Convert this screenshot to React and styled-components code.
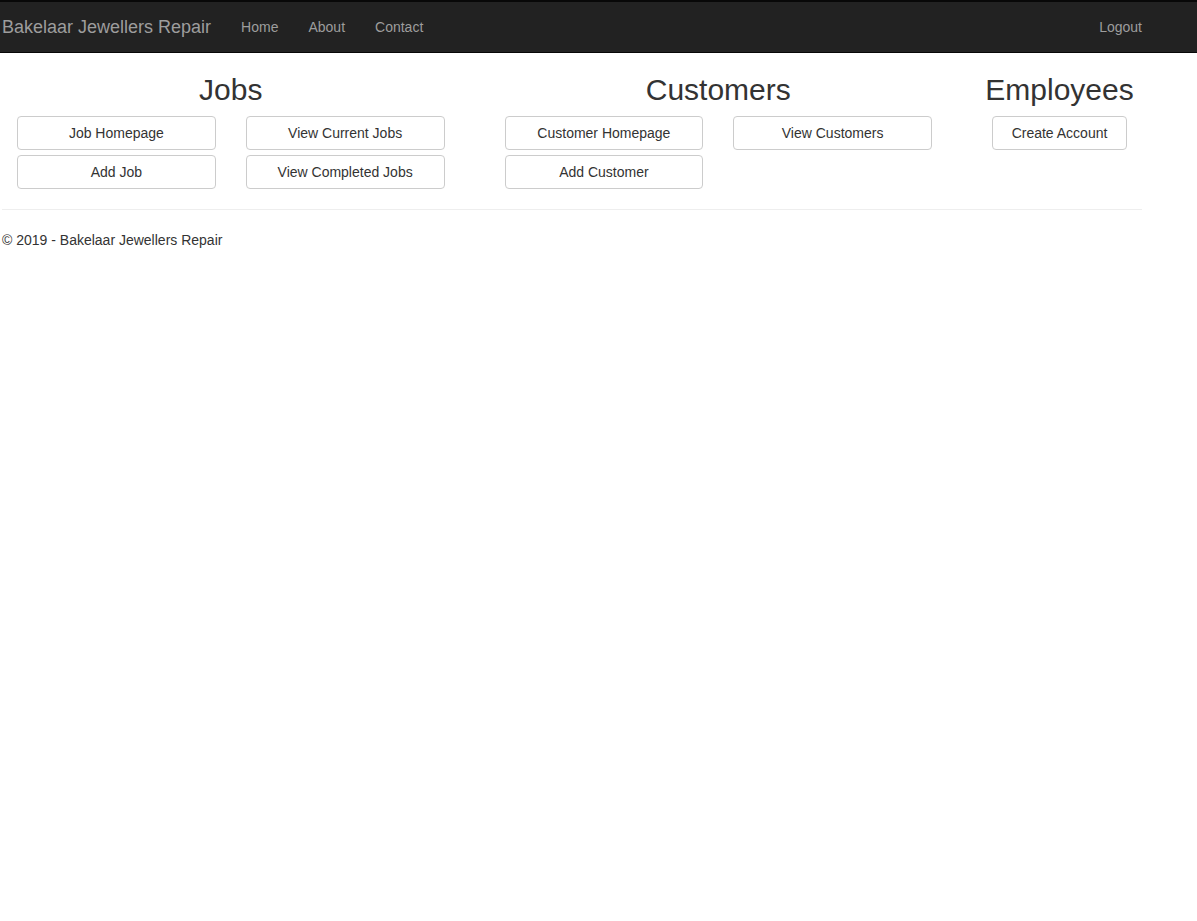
import React from "react";
import styled, { createGlobalStyle } from "styled-components";

const GlobalStyle = createGlobalStyle`
  html, body {
    margin: 0;
    padding: 0;
    background: #fff;
  }
  body {
    font-family: "Liberation Sans", Arial, Helvetica, sans-serif;
    font-size: 14px;
    line-height: 1.42857;
    color: #333;
  }
  * {
    box-sizing: border-box;
  }
`;

const Navbar = styled.nav`
  background-color: #222;
  border-top: 2px solid #080808;
  border-bottom: 1px solid #080808;
  height: 53px;
`;

const NavContainer = styled.div`
  width: 1140px;
  margin-left: 2px;
  display: flex;
  align-items: center;
  height: 50px;
`;

const Brand = styled.a`
  font-size: 18px;
  line-height: 20px;
  color: #9d9d9d;
  padding-right: 15px;
  text-decoration: none;
`;

const NavList = styled.ul`
  display: flex;
  list-style: none;
  margin: 0;
  padding: 0;
  margin-left: ${(p) => (p.right ? "auto" : "0")};
  margin-right: ${(p) => (p.right ? "-15px" : "0")};
`;

const NavLink = styled.a`
  display: block;
  padding: 15px;
  line-height: 20px;
  color: #9d9d9d;
  text-decoration: none;
`;

const Container = styled.div`
  width: 1140px;
  margin-left: 2px;
`;

const Row = styled.div`
  display: flex;
  margin: 0 -15px;
`;

const Column = styled.section`
  width: ${(p) => (p.span / 12) * 1170}px;
  padding: 0 15px;
  text-align: center;
`;

const Heading = styled.h2`
  font-size: 30px;
  font-weight: 500;
  line-height: 1.1;
  margin: 20px 0 10px;
  color: #333;
`;

const ButtonGrid = styled.div`
  display: grid;
  grid-template-columns: ${(p) => (p.single ? "1fr" : "1fr 1fr")};
  column-gap: 30px;
  row-gap: 5px;
  padding: 0 15px;
`;

const Button = styled.a`
  display: block;
  padding: 6px 12px;
  font-size: 14px;
  line-height: 20px;
  color: #333;
  background: #fff;
  border: 1px solid #ccc;
  border-radius: 4px;
  text-align: center;
  text-decoration: none;
  white-space: nowrap;
`;

const Divider = styled.hr`
  margin: 20px 0;
  border: 0;
  border-top: 1px solid #eee;
`;

const Footer = styled.footer`
  padding-top: 1px;

  p {
    margin: 0;
  }
`;

const sections = [
  {
    title: "Jobs",
    span: 5,
    buttons: ["Job Homepage", "View Current Jobs", "Add Job", "View Completed Jobs"],
  },
  {
    title: "Customers",
    span: 5,
    buttons: ["Customer Homepage", "View Customers", "Add Customer"],
  },
  {
    title: "Employees",
    span: 2,
    single: true,
    buttons: ["Create Account"],
  },
];

const App = () => (
  <>
    <GlobalStyle />
    <Navbar>
      <NavContainer>
        <Brand href="#">Bakelaar Jewellers Repair</Brand>
        <NavList>
          <li><NavLink href="#">Home</NavLink></li>
          <li><NavLink href="#">About</NavLink></li>
          <li><NavLink href="#">Contact</NavLink></li>
        </NavList>
        <NavList right>
          <li><NavLink href="#">Logout</NavLink></li>
        </NavList>
      </NavContainer>
    </Navbar>
    <Container>
      <Row>
        {sections.map((s) => (
          <Column key={s.title} span={s.span}>
            <Heading>{s.title}</Heading>
            <ButtonGrid single={s.single}>
              {s.buttons.map((b) => (
                <Button key={b} href="#">{b}</Button>
              ))}
            </ButtonGrid>
          </Column>
        ))}
      </Row>
      <Divider />
      <Footer>
        <p>© 2019 - Bakelaar Jewellers Repair</p>
      </Footer>
    </Container>
  </>
);

export default App;
